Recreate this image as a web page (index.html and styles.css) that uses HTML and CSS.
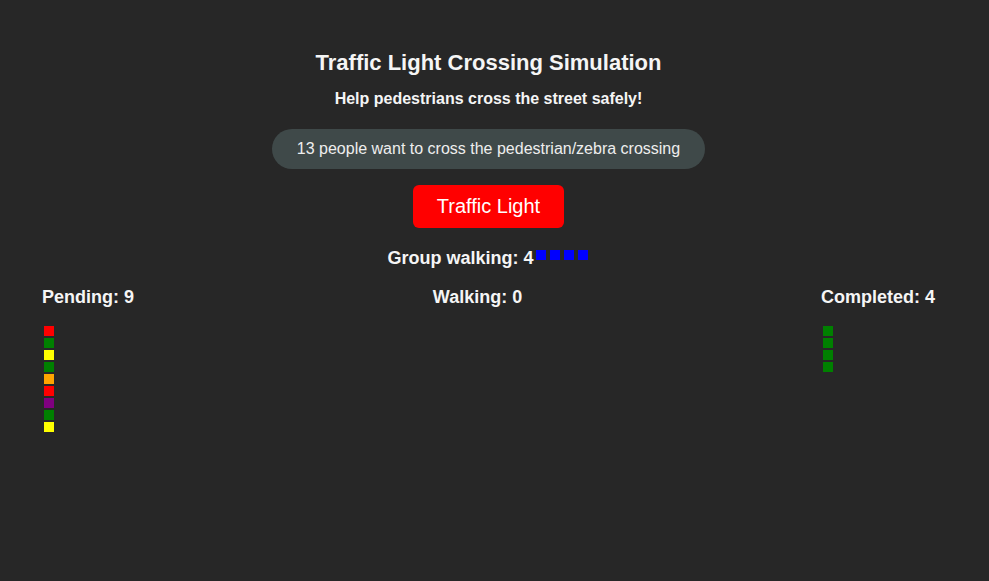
FILE: index.html
```html
<!DOCTYPE html>
<html lang="en">
<head>
<meta charset="utf-8">
<title>Traffic Light Crossing Simulation</title>
<link rel="stylesheet" href="styles.css">
</head>
<body>
<main class="app">
  <h1 class="title">Traffic Light Crossing Simulation</h1>
  <p class="subtitle">Help pedestrians cross the street safely!</p>
  <div class="notice">13 people want to cross the pedestrian/zebra crossing</div>
  <button class="light-btn" type="button">Traffic Light</button>
  <div class="group">Group walking: 4<span class="group-people"><span class="person blue"></span><span class="person blue"></span><span class="person blue"></span><span class="person blue"></span></span></div>
  <section class="columns">
    <div class="column">
      <h2 class="col-title">Pending: 9</h2>
      <div class="queue">
        <span class="person red"></span>
        <span class="person green"></span>
        <span class="person yellow"></span>
        <span class="person green"></span>
        <span class="person orange"></span>
        <span class="person red"></span>
        <span class="person purple"></span>
        <span class="person green"></span>
        <span class="person yellow"></span>
      </div>
    </div>
    <div class="column">
      <h2 class="col-title">Walking: 0</h2>
      <div class="queue"></div>
    </div>
    <div class="column">
      <h2 class="col-title">Completed: 4</h2>
      <div class="queue">
        <span class="person green"></span>
        <span class="person green"></span>
        <span class="person green"></span>
        <span class="person green"></span>
      </div>
    </div>
  </section>
</main>
</body>
</html>
```
FILE: styles.css
```css
html, body {
  margin: 0;
  padding: 0;
  background: #272727;
}

body {
  font-family: "Liberation Sans", Arial, sans-serif;
  color: #f5f5f5;
  min-height: 581px;
}

.app {
  width: 977px;
  padding-top: 50px;
  display: flex;
  flex-direction: column;
  align-items: center;
}

.title {
  margin: 0;
  font-size: 22px;
  line-height: 26px;
  font-weight: bold;
}

.subtitle {
  margin: 13px 0 0;
  font-size: 16px;
  line-height: 20px;
  font-weight: bold;
}

.notice {
  margin-top: 20px;
  height: 40px;
  box-sizing: border-box;
  padding: 10px 25px;
  font-size: 16px;
  line-height: 20px;
  background: #3f4949;
  color: #eeeeee;
  border-radius: 20px;
}

.light-btn {
  margin-top: 16px;
  border: none;
  background: #ff0000;
  color: #ffffff;
  font-family: "Liberation Sans", Arial, sans-serif;
  font-size: 20px;
  line-height: 23px;
  padding: 10px 24px;
  border-radius: 6px;
}

.group {
  margin-top: 19px;
  font-size: 18px;
  line-height: 22px;
  font-weight: bold;
}

.group-people .person {
  display: inline-block;
  vertical-align: top;
  margin: 3px 2px 0;
}

.person {
  display: block;
  width: 10px;
  height: 10px;
  margin: 2px;
}

.columns {
  align-self: stretch;
  margin-top: 17px;
  padding: 0 42px;
  display: flex;
  justify-content: space-between;
}

.col-title {
  margin: 0;
  font-size: 18px;
  line-height: 22px;
  font-weight: bold;
}

.queue {
  margin-top: 18px;
}

.red { background: #ff0000; }
.green { background: #008000; }
.yellow { background: #ffff00; }
.orange { background: #ffa500; }
.purple { background: #800080; }
.blue { background: #0000ff; }
```
